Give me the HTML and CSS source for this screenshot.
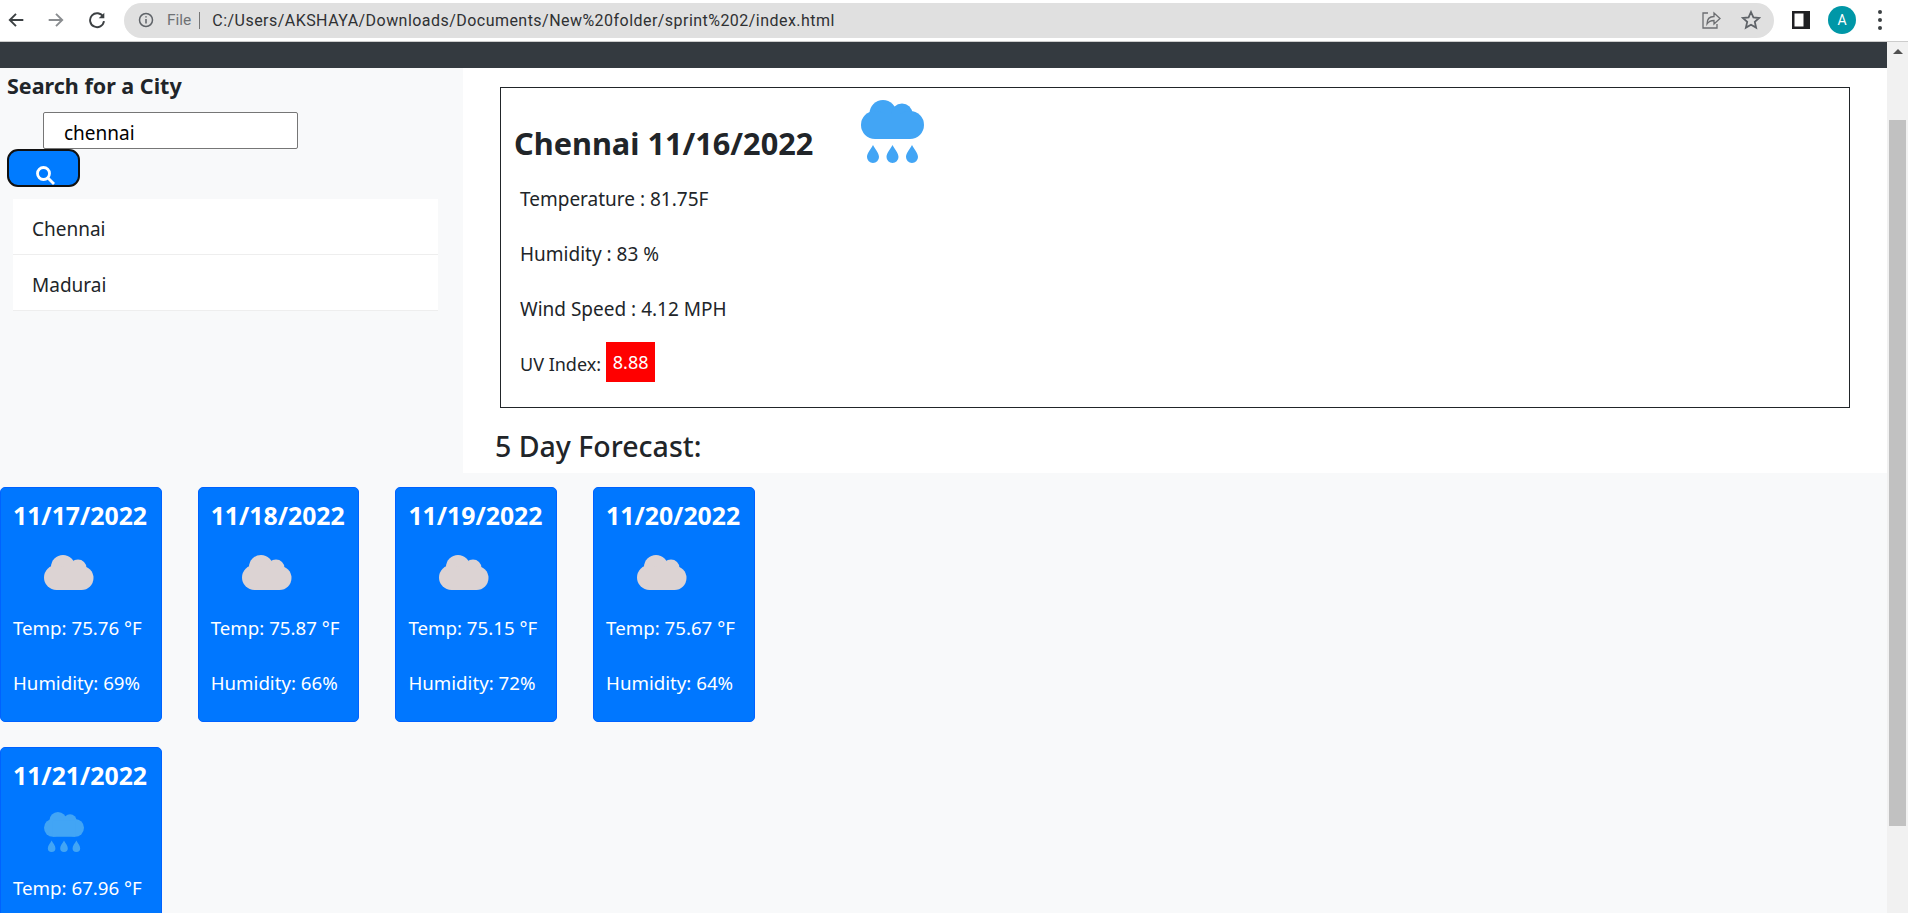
FILE: index.html
```html
<!DOCTYPE html>
<html lang="en">
<head>
<meta charset="utf-8">
<title>Weather Dashboard</title>
<link rel="stylesheet" href="styles.css">
</head>
<body>
<svg class="defs" width="0" height="0" aria-hidden="true">
  <symbol id="rain" viewBox="0 0 63 63">
    <circle cx="22" cy="13.5" r="13.5"/><circle cx="41" cy="14" r="10.5"/><circle cx="14" cy="25" r="14"/><circle cx="49" cy="25" r="14"/><rect x="14" y="14" width="35" height="25"/>
    <path d="M12 45c2 4 6 8 6 12a6 6 0 0 1-12 0c0-4 4-8 6-12zM31.500 45c2 4 6 8 6 12a6 6 0 0 1-12 0c0-4 4-8 6-12zM51 45c2 4 6 8 6 12a6 6 0 0 1-12 0c0-4 4-8 6-12z"/>
  </symbol>
  <symbol id="cloud" viewBox="0 0 50 35">
    <circle cx="19" cy="12" r="12"/><circle cx="34" cy="13" r="8.500"/><circle cx="12.500" cy="22.500" r="12.500"/><circle cx="37.500" cy="23" r="12"/><rect x="12.500" y="12" width="25" height="23"/>
  </symbol>
</svg>
<div class="browser">
  <header class="toolbar">
    <svg class="nav back" viewBox="0 0 16 16"><path d="M14.500 8H2.500M8 2.500 2.500 8 8 13.500"/></svg>
    <svg class="nav forward" viewBox="0 0 16 16"><path d="M1.500 8h12M8 2.500 13.500 8 8 13.500"/></svg>
    <svg class="nav reload" viewBox="0 0 16 16"><path d="M13.500 5.200A6.200 6.200 0 1 0 14.200 9"/><path class="solid" d="M14.500 1.500v5h-5z"/></svg>
    <div class="omnibox">
      <svg class="info" viewBox="0 0 16 16"><circle cx="8" cy="8" r="6.500"/><path d="M8 7v4.500M8 4.200v1.300"/></svg>
      <span class="scheme">File</span>
      <span class="divider"></span>
      <span class="url">C:/Users/AKSHAYA/Downloads/Documents/New%20folder/sprint%202/index.html</span>
      <svg class="share" viewBox="0 0 20 20"><path d="M7 3H2v15h14v-4"/><path d="M6 14c0-5 3-7.500 7-7.500V3l6 5.500-6 5.500v-3.500c-3 0-5.500 1-7 3.500z"/></svg>
      <svg class="star" viewBox="0 0 20 20"><path d="M10 2l2.400 5.400 5.800.6-4.400 3.900 1.300 5.700L10 14.700l-5.100 2.900 1.300-5.700L1.800 8l5.800-.6z"/></svg>
    </div>
    <svg class="panel" viewBox="0 0 18 18"><path class="frame" d="M0 0h18v18H0zM2.500 2.500v13h9v-13z"/></svg>
    <span class="avatar">A</span>
    <span class="menu"><i></i><i></i><i></i></span>
  </header>
  <div class="viewport">
    <div class="page">
      <nav class="topbar"></nav>
      <div class="top">
        <aside class="sidebar">
          <h2 class="search-title">Search for a City</h2>
          <input class="search-input" type="text" value="chennai">
          <button class="search-btn" type="button" aria-label="Search">
            <svg viewBox="0 0 20 20"><circle cx="8.500" cy="8.500" r="6"/><path d="M13 13l6 6"/></svg>
          </button>
          <ul class="history">
            <li>Chennai</li>
            <li>Madurai</li>
          </ul>
        </aside>
        <main class="main">
          <section class="current">
            <div class="current-head">
              <h2 class="city">Chennai 11/16/2022</h2>
              <svg class="current-icon"><use href="#rain"/></svg>
            </div>
            <p class="stat">Temperature : 81.75F</p>
            <p class="stat">Humidity : 83 %</p>
            <p class="stat">Wind Speed : 4.12 MPH</p>
            <p class="stat stat-uv">UV Index: <span class="uv">8.88</span></p>
          </section>
          <h3 class="forecast-title">5 Day Forecast:</h3>
        </main>
      </div>
      <div class="cards">
        <article class="card">
          <h4>11/17/2022</h4>
          <div class="card-icon"><svg class="cloud"><use href="#cloud"/></svg></div>
          <p>Temp: 75.76 °F</p>
          <p>Humidity: 69%</p>
        </article>
        <article class="card">
          <h4>11/18/2022</h4>
          <div class="card-icon"><svg class="cloud"><use href="#cloud"/></svg></div>
          <p>Temp: 75.87 °F</p>
          <p>Humidity: 66%</p>
        </article>
        <article class="card">
          <h4>11/19/2022</h4>
          <div class="card-icon"><svg class="cloud"><use href="#cloud"/></svg></div>
          <p>Temp: 75.15 °F</p>
          <p>Humidity: 72%</p>
        </article>
        <article class="card">
          <h4>11/20/2022</h4>
          <div class="card-icon"><svg class="cloud"><use href="#cloud"/></svg></div>
          <p>Temp: 75.67 °F</p>
          <p>Humidity: 64%</p>
        </article>
        <article class="card">
          <h4>11/21/2022</h4>
          <div class="card-icon"><svg class="rain-small"><use href="#rain"/></svg></div>
          <p>Temp: 67.96 °F</p>
        </article>
      </div>
    </div>
    <div class="scrollbar">
      <span class="arrow"></span>
      <span class="thumb"></span>
    </div>
  </div>
</div>
</body>
</html>
```
FILE: styles.css
```css
* { box-sizing: border-box; }
html, body { margin: 0; height: 100%; overflow: hidden; }
body { font-family: "Noto Sans", "Open Sans", sans-serif; color: #212529; background: #f8f9fa; }
.defs { display: block; height: 0; }
.browser { display: flex; flex-direction: column; height: 913px; }

.toolbar { flex: 0 0 42px; display: flex; align-items: center; background: #fff; border-bottom: 1px solid #ccc; padding: 0 0 1px 7px; }
.nav { width: 18px; height: 18px; fill: none; stroke: #3c4043; stroke-width: 1.700; }
.nav.forward { margin-left: 22px; stroke: #8a8d90; }
.nav.reload { margin-left: 23px; width: 18px; height: 18px; }
.solid { fill: #3c4043; stroke: none; }
.omnibox { margin-left: 18px; flex: 0 0 1650px; height: 35px; border-radius: 18px; background: #e0e0e0; display: flex; align-items: center; padding-left: 14px; }
.info { width: 16px; height: 16px; fill: none; stroke: #5f6368; stroke-width: 1.500; }
.scheme { margin-left: 13px; font: 15.500px "Roboto", sans-serif; color: #6f7275; }
.divider { width: 1px; height: 17px; background: #777; margin-left: 8px; }
.url { margin-left: 12px; font: 16px "Roboto", sans-serif; letter-spacing: 0.460px; color: #2f3133; white-space: nowrap; }
.share { margin-left: auto; width: 20px; height: 20px; fill: none; stroke: #6c6e71; stroke-width: 1.300; }
.star { margin: 0 13px 0 20px; width: 20px; height: 20px; fill: none; stroke: #5f6368; stroke-width: 1.800; }
.panel { margin-left: 18px; width: 18px; height: 18px; }
.frame { fill: #202124; fill-rule: evenodd; }
.avatar { margin-left: 18px; width: 28px; height: 28px; border-radius: 50%; background: #0097a7; color: #fff; font: 14px/28px "Roboto", sans-serif; text-align: center; }
.menu { margin-left: 22px; display: flex; flex-direction: column; gap: 4px; }
.menu i { width: 4px; height: 4px; border-radius: 50%; background: #3c4043; display: block; }

.viewport { flex: 1; display: flex; min-height: 0; }
.page { flex: 1; min-width: 0; overflow: hidden; background: #f8f9fa; }
.topbar { height: 26px; background: #343a40; }
.top { display: flex; height: 405px; background: #fff; }

.sidebar { flex: 0 0 463px; background: #f8f9fa; padding: 0 0 0 7px; }
.search-title { margin: 3px 0 0; font-size: 21.500px; line-height: 29px; font-weight: 700; }
.search-input { display: block; width: 255px; height: 37px; margin: 12px 0 0 36px; padding: 4px 20px 0; border: 1px solid #767676; border-radius: 2px; background: #fff; font: 19px "Noto Sans", sans-serif; color: #000; }
.search-btn { display: block; width: 73px; height: 38px; padding: 0; margin: 0; border: 2px solid #111; border-radius: 11px; background: #007bff; text-align: center; }
.search-btn svg { display: block; width: 20px; height: 20px; margin: 13px 0 0 26px; fill: none; stroke: #fff; stroke-width: 2.800; }
.history { list-style: none; margin: 12px 0 0 6px; padding: 0; width: 425px; }
.history li { height: 56px; padding: 0 19px; background: #fff; border-bottom: 1px solid #eee; font-size: 19px; line-height: 60px; }

.main { flex: 1; min-width: 0; padding: 19px 0 0 37px; }
.current { width: 1350px; height: 321px; border: 1px solid #212529; padding: 0 0 0 13px; }
.current-head { display: flex; height: 92px; }
.city { margin: 34px 0 0; font-size: 30.700px; line-height: 42px; font-weight: 700; white-space: nowrap; }
.current-icon { width: 63px; height: 63px; margin: 12px 0 0 48px; fill: #42a5f5; }
.stat { margin: 0 0 0 6px; height: 55px; font-size: 19px; line-height: 38px; white-space: nowrap; }
.stat-uv { margin-top: -3px; font-size: 18px; }
.uv { display: inline-block; padding: 0 7px; height: 40px; line-height: 40px; background: #f00; color: #fff; vertical-align: 2px; }
.forecast-title { margin: 20px 0 0 -5px; font-size: 28.500px; line-height: 37px; font-weight: 500; white-space: nowrap; }

.cards { display: grid; grid-template-columns: repeat(4, 161.500px); gap: 25px 36.200px; padding-top: 14px; }
.card { height: 235px; border: 1px solid #0062ff; border-radius: 5px; background: #0077ff; color: #fff; padding: 11px 0 0 12px; }
.card h4 { margin: 0; font-size: 24.800px; line-height: 33px; font-weight: 700; white-space: nowrap; }
.card-icon { height: 77px; padding: 23px 0 0 31px; }
.cloud { display: block; width: 50px; height: 35px; fill: #dcd3d3; }
.rain-small { display: block; width: 40px; height: 40px; margin-top: -3px; fill: #42a5f5; }
.card p { margin: 0; height: 55px; font-size: 18.700px; line-height: 38px; white-space: nowrap; }

.scrollbar { flex: 0 0 21px; background: #f1f1f1; position: relative; }
.arrow { position: absolute; left: 6px; top: 7px; width: 0; height: 0; border: 5px solid transparent; border-top: 0; border-bottom: 5px solid #505050; }
.thumb { position: absolute; left: 2px; right: 2px; top: 78px; height: 706px; background: #c1c1c1; }
```
